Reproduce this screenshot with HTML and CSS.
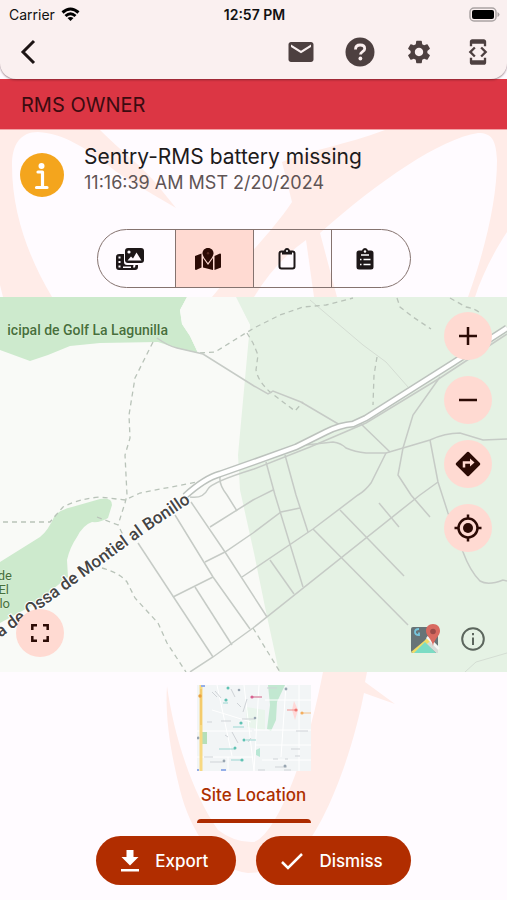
FILE: index.html
```html
<!DOCTYPE html>
<html lang="en">
<head>
  <meta charset="UTF-8" />
  <meta name="viewport" content="width=device-width, initial-scale=1" />
  <title>RMS Owner</title>
  <link rel="stylesheet" href="styles.css">
</head>
<body>
  <!-- Watermark -->
  <svg class="watermark" viewBox="0 0 507 900" aria-hidden="true">
    <path d="M0 130H100C120 150 140 165 154 181L176 208C150 192 125 180 108 165C85 148 65 134 38 132C20 132 12 145 12 165C12 215 30 260 52 297H3L0 285Z" />
    <path d="M385 130H507V232C495 250 482 275 475 297H468C485 250 497 200 497 160C496 140 492 133 478 133C440 139 380 180 320 233L337 297H212C235 268 270 235 292 202L282 162C310 150 345 145 385 130Z" />
    <path class="gap" d="M306 240L314 297H254Q275 262 306 240Z" />
    <path d="M167 686C173 730 190 790 218 830Q235 843 254 842C275 835 305 765 323 672H367L365 682L395 704L364 693C355 740 332 815 300 853Q275 873 248 873C215 870 190 830 180 790C170 750 165 715 167 686Z" />
  </svg>

  <header class="topbar">
    <div class="status">
      <div class="carrier">
        Carrier
        <svg width="19" height="15" viewBox="0 0 19 15" fill="none" stroke="#000" stroke-width="3">
          <path d="M1.500 5.500Q9.500-1.500 17.500 5.500" />
          <path d="M4.500 9Q9.500 4.500 14.500 9" />
          <path d="M6.500 11Q9.500 9 12.500 11L9.500 14Z" fill="#000" stroke="none" />
        </svg>
      </div>
      <div class="clock">12:57 PM</div>
      <svg class="battery" width="31" height="15" viewBox="0 0 31 15">
        <rect x="1" y="1" width="26" height="13" rx="4" fill="none" stroke="#aaa3a3" stroke-width="1.500" />
        <rect x="3" y="3" width="22" height="9" rx="2" fill="#000" />
        <path d="M28.500 5v5q2-1 2-2.500t-2-2.500" fill="#aaa3a3" />
      </svg>
    </div>
    <nav class="toolbar">
      <button class="back" aria-label="Back">
        <svg width="16" height="26" viewBox="0 0 16 26" fill="none" stroke="#1c1414" stroke-width="3"><path d="M14 2L3 13L14 24" /></svg>
      </button>
      <div class="tools">
        <button aria-label="Messages">
          <svg width="30" height="30" viewBox="0 0 24 24"><path d="M20 4H4c-1.100 0-2 .9-2 2v12c0 1.100.9 2 2 2h16c1.100 0 2-.9 2-2V6c0-1.100-.9-2-2-2zm0 4l-8 5-8-5V6l8 5 8-5v2z" /></svg>
        </button>
        <button aria-label="Help">
          <svg width="30" height="30" viewBox="0 0 30 30"><circle cx="15" cy="15" r="14.500" /><path d="M10.500 12.500c0-3 2-4.500 4.700-4.500 2.700 0 4.500 1.400 4.500 3.700 0 3-4.200 2.900-4.200 5.800" fill="none" stroke="#fbefef" stroke-width="2.800" /><circle cx="15.400" cy="21.500" r="1.900" fill="#fbefef" /></svg>
        </button>
        <button aria-label="Settings">
          <svg width="28" height="28" viewBox="0 0 24 24"><path d="M19.140 12.940c.04-.3.060-.61.060-.94 0-.32-.02-.64-.07-.94l2.030-1.580c.18-.14.230-.41.120-.61l-1.920-3.320c-.12-.22-.37-.29-.59-.22l-2.390.96c-.5-.38-1.030-.7-1.620-.94l-.36-2.540c-.04-.24-.24-.41-.48-.41h-3.840c-.24 0-.43.170-.47.410l-.36 2.540c-.59.240-1.130.570-1.620.940l-2.390-.96c-.22-.08-.47 0-.59.220L2.740 8.870c-.12.210-.08.470.120.610l2.030 1.580c-.05.300-.09.630-.09.940s.02.640.070.940l-2.030 1.580c-.18.140-.23.410-.12.610l1.920 3.320c.12.220.37.290.59.220l2.390-.96c.5.380 1.030.7 1.620.94l.36 2.540c.05.240.24.410.48.410h3.840c.24 0 .44-.17.470-.41l.36-2.540c.59-.24 1.130-.56 1.620-.94l2.390.96c.22.080.47 0 .59-.22l1.920-3.320c.12-.22.070-.47-.12-.61l-2.010-1.580zM12 15.600c-1.980 0-3.600-1.620-3.600-3.600s1.620-3.600 3.600-3.600 3.600 1.620 3.600 3.600-1.620 3.600-3.600 3.600z" /></svg>
        </button>
        <button aria-label="Developer">
          <svg width="28" height="28" viewBox="0 0 24 24"><path d="M7 5h10v2h2V3c0-1.100-.9-1.990-2-1.990L7 1c-1.100 0-2 .9-2 2v4h2V5zm8.410 11.590L20 12l-4.590-4.590L14 8.830 17.170 12 14 15.170l1.410 1.420zM10 15.170L6.830 12 10 8.830 8.590 7.410 4 12l4.590 4.590L10 15.170zM17 19H7v-2H5v4c0 1.100.9 2 2 2h10c1.100 0 2-.9 2-2v-4h-2v2z" /></svg>
        </button>
      </div>
    </nav>
  </header>

  <h1 class="banner">RMS OWNER</h1>

  <main>
    <section class="alert">
      <svg width="44" height="44" viewBox="0 0 44 44">
        <circle cx="22" cy="22" r="22" fill="#f4a51d" />
        <circle cx="21.500" cy="13" r="3" fill="#fff" />
        <path d="M18 19H22.500V34M16.500 34.500H27" fill="none" stroke="#fff" stroke-width="3.200" stroke-linecap="round" stroke-linejoin="round" />
      </svg>
      <div>
        <h2>Sentry-RMS battery missing</h2>
        <p>11:16:39 AM MST 2/20/2024</p>
      </div>
    </section>

    <div class="segments">
      <button aria-label="Media">
        <svg width="28" height="24" viewBox="0 0 28 24">
          <path d="M3 7H8V15Q8 18 11 18H22V20Q22 23 19 23H3Q0 23 0 20V10Q0 7 3 7Z" />
          <path d="M2.500 9.500h2v2h-2zM2.500 14h2v2h-2zM2.500 18.500h2v2h-2zM7 19.500H15V21H7zM17.500 18H19.500L19 20.500H17Z" fill="#fffbff" />
          <rect x="9" y="1" width="19" height="15" rx="3" />
          <circle cx="13" cy="5" r="1.600" fill="#fffbff" />
          <path d="M11.500 13.500L15 9.500L17 11.500L20.500 5.500L25.500 13.500Z" fill="#fffbff" />
        </svg>
      </button>
      <button class="active" aria-label="Map">
        <svg width="26" height="24" viewBox="0 0 26 24">
          <path d="M0 9L6.500 6.500V20.500L1 23Q0 23 0 22ZM8 11L13 18L18 11V23L8 20.500ZM19.500 9L25 6.500Q26 6.500 26 7.500V20.500L19.500 23Z" />
          <path d="M13 1C9.500 1 7.500 3.500 7.500 6.300C7.500 9 11 13.500 13 16C15 13.500 18.500 9 18.500 6.300C18.500 3.500 16.500 1 13 1Z" />
          <circle cx="13" cy="6.300" r="1.200" fill="#5a2d24" />
        </svg>
      </button>
      <button aria-label="Notes">
        <svg width="18" height="24" viewBox="0 0 18 24">
          <rect x="1.500" y="4.500" width="15" height="17" rx="2" fill="none" stroke="#1d1718" stroke-width="2" />
          <path d="M4 4H6Q6.500 1 9 1T12 4H14V7.500H4Z" /><circle cx="9" cy="4" r="1" fill="#fff" />
        </svg>
      </button>
      <button aria-label="Checklist">
        <svg width="18" height="24" viewBox="0 0 18 24">
          <path d="M3 3.500H6Q6.500 1 9 1T12 3.500H15Q17.500 3.500 17.500 6V20Q17.500 22.500 15 22.500H3Q.5 22.500 .5 20V6Q.5 3.500 3 3.500Z" />
          <circle cx="9" cy="4.500" r="1.200" fill="#fff" />
          <path d="M5 8H13M4 12.500H5.500M7.500 12.500H14.500M4 17.500H5.500M7.500 17.500H14.500" stroke="#fff" stroke-width="1.300" />
        </svg>
      </button>
    </div>

    <section class="map">
      <svg class="map-canvas" viewBox="0 0 507 375">
        <rect width="507" height="375" fill="#f9faf7" />
        <path class="wood" d="M235 0H507V375H279L265 310L254 256L240 193L238 158L246 71L250 28Z" />
        <path class="park" d="M0 0H187L180 13L182 27L190 39L198 56L180 52L158 45L100 46L70 49L48 58L30 64L0 53Z" />
        <path class="land" d="M187 0H236L250 28L246 60L203 57L198 56L190 39L182 27L180 13Z" />
        <path class="park" d="M0 265L40 240Q48 234 55 218Q62 212 72 210L100 202Q112 200 112 208L108 221Q100 226 92 225Q83 228 77 240Q70 250 67 263L68 280L33 308L0 326Z" />

        <g class="road faint">
          <path d="M310 3L363 48L386 65L408 90" />
          <path d="M465 375L476 365L507 356" />
        </g>
        <g class="trail">
          <path d="M153 45L135 81L129 118L130 141L125 158L127 198L125 206L118 228" />
          <path d="M3 225H50L63 210Q78 202 100 200L125 203L140 196L197 185" />
          <path d="M97 220L118 228L124 240" />
          <path d="M102 271Q120 276 127 285L135 301L158 326L167 346L186 375" />
          <path d="M200 56L215 55L254 31L280 18L303 10L326 8L353 1" />
          <path d="M247 36L253 46L258 58L256 73Q258 84 270 95L295 114L303 105" />
          <path d="M397 1L400 10L413 20L431 32" />
          <path d="M450 1L466 10Q476 12 480 16" />
          <path d="M377 60L374 78L373 108" />
          <path d="M253 331L280 375" />
        </g>
        <g class="road">
          <path d="M157 41Q168 49 177 51L203 57L254 89L268 97L273 94L301 105L340 128" />
          <path d="M360 126L390 155" />
          <path d="M306 148L333 145Q341 146 346 151Q355 155 366 156H386L403 151L430 143Q445 136 460 136L483 143L507 142" />
          <path d="M440 80L413 118L403 151L398 178L411 198L430 220" />
          <path d="M386 156L371 186Q365 194 358 198L313 232L242 280" />
          <path d="M430 143L438 185L448 216L463 255Q470 274 480 284Q488 289 503 283L507 284" />
          <path d="M438 185L420 198L253 331L213 360L190 375" />
          <path d="M266 165L275 198L303 290" />
          <path d="M285 158L296 198L308 235" />
          <path d="M273 193L253 203L210 230" />
          <path d="M300 211L281 215L253 236L225 255L205 265" />
          <path d="M138 246L213 360" />
          <path d="M175 218L213 280L250 332" />
          <path d="M191 205L225 255L267 320" />
          <path d="M213 280L173 300" />
          <path d="M195 290L232 348" />
          <path d="M270 263L294 297" />
          <path d="M313 232L408 328" />
          <path d="M340 213L404 279" />
          <path d="M379 206L399 230" />
          <path d="M220 180Q219 188 227 198L237 214" />
          <path d="M190 200Q203 202 208 192Q212 185 254 172L310 150L366 126L440 81L507 37" />
        </g>
        <path class="highway-edge" d="M185 199Q205 181 220 177L254 165L296 150L326 135Q340 128 353 127L366 121L453 66L507 31" />
        <path class="highway" d="M185 199Q205 181 220 177L254 165L296 150L326 135Q340 128 353 127L366 121L453 66L507 31" />

        <path id="roadname" d="M-60 384L0 341L145 236L191 205" fill="none" />
        <text class="road-label" text-anchor="end"><textPath href="#roadname" startOffset="100%">ra de Ossa de Montiel al Bonillo</textPath></text>
        <text class="park-label" x="168" y="38" text-anchor="end">icipal de Golf La Lagunilla</text>
        <g class="park-label small" text-anchor="end">
          <text x="12" y="283">de</text>
          <text x="9" y="297">El</text>
          <text x="10" y="311">lo</text>
        </g>
      </svg>

      <div class="map-controls">
        <button class="round" aria-label="Zoom in"><svg width="18" height="18" viewBox="0 0 18 18"><path d="M9 0V18M0 9H18" /></svg></button>
        <button class="round" aria-label="Zoom out"><svg width="18" height="18" viewBox="0 0 18 18"><path d="M0 9H18" /></svg></button>
        <button class="round" aria-label="Directions"><svg width="26" height="26" viewBox="0 0 26 26"><path d="M13 2L24 13L13 24L2 13Z" fill="#2c0b05" stroke-linejoin="round" /><path d="M9 16.500V11.500H16" stroke="#ffdad2" /><path d="M15 7.500L19.500 11.500L15 15.500Z" fill="#ffdad2" stroke="none" /></svg></button>
        <button class="round" aria-label="My location"><svg width="28" height="28" viewBox="0 0 28 28"><circle cx="14" cy="14" r="9.500" /><circle cx="14" cy="14" r="5" fill="#2c0b05" stroke="none" /><path d="M14 .5V5M14 23V27.500M.5 14H5M23 14H27.500" /></svg></button>
      </div>
      <button class="round fullscreen" aria-label="Full screen"><svg width="18" height="18" viewBox="0 0 18 18"><path d="M1.300 6V1.300H6M12 1.300H16.700V6M16.700 12V16.700H12M6 16.700H1.300V12" /></svg></button>
      <div class="attribution">
        <svg width="30" height="30" viewBox="0 0 30 30">
          <rect x="0" y="3" width="27" height="26" rx="2" fill="#677477" />
          <path d="M17 12L27 22V29H25L13 18Z" fill="#d7dcd7" />
          <path d="M19 12L0 28L2 29H5L23 14Z" fill="#f1dc67" />
          <path d="M14 18L25 29H3Z" fill="#7cdcc4" />
          <path d="M16 13L28 25" stroke="#f4f7f4" stroke-width="2.500" />
          <path d="M8 5Q4 5 4 8T8 11V8.500" fill="none" stroke="#78c5dc" stroke-width="1.800" />
          <path d="M22 0C17.500 0 15 3 15 7C15 12 21 15 22 22C23 15 29 12 29 7C29 3 26.500 0 22 0Z" fill="#d86a60" />
          <circle cx="22" cy="7.500" r="2.800" fill="#9c4b48" />
        </svg>
        <svg width="24" height="24" viewBox="0 0 24 24" fill="none" stroke="#5c665d" stroke-width="2"><circle cx="12" cy="12" r="10.800" /><path d="M12 10.500V18M12 6V8.300" /></svg>
      </div>
    </section>

    <div class="tabs">
      <button class="tab">
        <svg width="114" height="86" viewBox="0 0 114 86">
          <rect width="114" height="86" fill="#f2f5f6" />
          <path d="M71 0H88L80 17L79 35L74 46L70 44L73 20Z" fill="#c2e8d1" />
          <path d="M49 22L68 25V45L50 42Z" fill="#e9f5ec" />
          <rect x="5" y="47" width="5" height="12" fill="#b6dfb8" />
          <path d="M59 65L63 63V72L59 70Z" fill="#b9e7d5" />
          <path d="M97 16L101 25L98 35L95 25Z" fill="#ffd8d7" />
          <path d="M0 46H55M0 72H56M57 45H114M58 60H114M20 0L35 71M47 0L57 86M15 25L54 37M62 0L57 86M89 0L84 72M102 0V86M68 15H114M65 75H114M31 72V86" stroke="#fff" stroke-width="1" fill="none" />
          <path d="M4 0V86" stroke="#f8d982" stroke-width="3" />
          <path d="M4 4V40" stroke="#efbd56" stroke-width="1" />
          <path d="M18 6L24 13M34 4L38 12M50 14L46 27M35 47L41 58M28 50L31 52M10 37H15M24 36H34M45 34H58M7 72H16M13 77H26M78 82H90M99 46H111M70 3H80M61 85H68M87 85H94M98 71H103M94 64H103M76 74H81M88 74H91M40 18L44 22M15 7L20 12M51 57L54 53" stroke="#cfd3d7" stroke-width="1" />
          <path d="M22 64H38M36 42H47M34 75H46M26 18H31M49 55H59" stroke="#9ad6d1" stroke-width="1" />
          <g fill="#5fc2b3"><circle cx="31" cy="3" r="1.500" /><circle cx="29" cy="15" r="1.600" /><circle cx="44" cy="38" r="1.600" /><circle cx="47" cy="55" r="1.500" /><circle cx="38" cy="63" r="1.500" /><circle cx="45" cy="75" r="1.600" /></g>
          <g fill="#98a5b1"><circle cx="42" cy="5" r="1.300" /><circle cx="58" cy="33" r="1.300" /><circle cx="89" cy="4" r="1.400" /><circle cx="88" cy="81" r="1.500" /><circle cx="27" cy="76" r="1.400" /><circle cx="1" cy="53" r="1.400" /></g>
          <path d="M55 12H65" stroke="#e2abbd" stroke-width="2" /><circle cx="55" cy="12" r="1.600" fill="#d86191" />
          <path d="M90 25H98" stroke="#f08f8d" /><circle cx="99" cy="25" r="1.600" fill="#ed7772" />
          <path d="M106 28H114" stroke="#f3c28c" /><circle cx="105" cy="28" r="1.600" fill="#f4ae5f" />
          <circle cx="3" cy="11" r="1.700" fill="#e8a03f" /><path d="M24 85H29M4 1H8M0 85H2" stroke="#94aee8" stroke-width="2" />
        </svg>
        <span>Site Location</span>
      </button>
    </div>
  </main>

  <footer class="actions">
    <button>
      <svg width="18" height="22" viewBox="0 0 18 22" fill="#fff"><path d="M5.500 0H12.500V7H17.500L9 15.500L.5 7H5.500ZM0 19H18V21.500H0Z" /></svg>
      Export
    </button>
    <button>
      <svg width="22" height="18" viewBox="0 0 22 18" fill="none" stroke="#fff" stroke-width="2.500"><path d="M1 10L7 16L21 2" /></svg>
      Dismiss
    </button>
  </footer>
</body>
</html>
```

FILE: styles.css
```css
* {
  box-sizing: border-box;
  margin: 0;
  padding: 0;
}

body {
  position: relative;
  z-index: 0;
  display: flex;
  flex-direction: column;
  min-height: 100vh;
  background-color: #fffbff;
  color: #201a1b;
  font-family: Inter, "Liberation Sans", sans-serif;
}

button {
  display: flex;
  align-items: center;
  justify-content: center;
  border: none;
  background: none;
  font-family: inherit;
  cursor: pointer;
}

svg {
  display: block;
  flex-shrink: 0;
}

/* sits behind everything else */
.watermark {
  position: absolute;
  top: 0;
  left: 0;
  z-index: -1;
  width: 100%;
  fill: #ffece8;
}

.watermark .gap {
  fill: #fffbff;
}

/* Top bar */
.topbar {
  position: relative;
  height: 79px;
  background-color: #faf0f0;
  border-radius: 0 0 16px 16px;
  box-shadow: 0 1px 2px rgba(60, 20, 30, 0.5);
}

.status {
  display: grid;
  grid-template-columns: 1fr auto 1fr;
  align-items: center;
  height: 28px;
  padding: 0 7px 0 9px;
  color: #111;
  font-size: 14px;
}

.carrier {
  display: flex;
  align-items: center;
  gap: 6px;
}

.clock {
  font-weight: 600;
}

.battery {
  justify-self: end;
}

.toolbar {
  display: flex;
  align-items: center;
  justify-content: space-between;
  height: 48px;
  padding: 0 5px 0 10px;
}

.toolbar button {
  width: 48px;
  height: 48px;
}

.toolbar .back {
  width: 36px;
}

.tools {
  display: flex;
  gap: 11px;
  fill: #4d4040;
}

.banner {
  height: 51px;
  padding: 0 21px;
  background-color: #dc3644;
  border-bottom: 1px solid #f2a2a5;
  color: #3b0b10;
  font-size: 20px;
  font-weight: 400;
  line-height: 52px;
}

/* Alert summary */
.alert {
  display: flex;
  align-items: center;
  gap: 20px;
  height: 90px;
  padding: 0 20px;
}

.alert h2 {
  font-size: 21px;
  font-weight: 400;
  line-height: 28px;
  margin-top: -12px;
}

.alert p {
  color: #605455;
  font-size: 18px;
  line-height: 24px;
}

.segments {
  display: flex;
  width: 314px;
  height: 59px;
  margin: 9px auto;
  border: 1px solid #85736f;
  border-radius: 30px;
  overflow: hidden;
}

.segments button {
  flex: 1;
  padding-right: 12px;
  fill: #1d1718;
}

.segments button + button {
  border-left: 1px solid #85736f;
}

.segments .active {
  background-color: #ffdad2;
  fill: #2c0b05;
}

/* Map */
.map {
  position: relative;
}

.map-canvas {
  width: 100%;
  height: auto;
}

.land {
  fill: #f9faf7;
}

.wood {
  fill: #e5f2e4;
}

.park {
  fill: #cdeacd;
}

.road {
  fill: none;
  stroke: #c6cbc6;
  stroke-width: 1.5;
}

.faint {
  stroke: #d4ddd3;
  stroke-width: 1;
}

.trail {
  fill: none;
  stroke: #b9c3b9;
  stroke-width: 1.3;
  stroke-dasharray: 5 4;
}

.highway-edge {
  fill: none;
  stroke: #bcc2bd;
  stroke-width: 7;
}

.highway {
  fill: none;
  stroke: #fff;
  stroke-width: 4;
}

.road-label,
.park-label {
  font-family: Roboto, sans-serif;
  stroke: #fff;
  stroke-width: 2;
  paint-order: stroke;
}

.road-label {
  fill: #444;
  font-size: 17px;
  font-weight: 500;
}

.park-label {
  fill: #47703c;
  stroke: #daf0d8;
  stroke-width: 1;
  font-size: 14px;
  font-weight: 500;
}

.small {
  font-size: 13px;
  font-weight: 400;
}

.map-controls {
  position: absolute;
  top: 15px;
  right: 15px;
  display: flex;
  flex-direction: column;
  gap: 16px;
}

.round {
  width: 48px;
  height: 48px;
  border-radius: 50%;
  background-color: #ffdad2;
  fill: none;
  stroke: #2c0b05;
  stroke-width: 2.5;
}

.fullscreen {
  position: absolute;
  bottom: 15px;
  left: 16px;
}

.attribution {
  position: absolute;
  right: 22px;
  bottom: 18px;
  display: flex;
  align-items: center;
  gap: 20px;
}

/* Tabs */
.tabs {
  display: flex;
  justify-content: center;
  padding-top: 13px;
}

.tab {
  flex-direction: column;
  gap: 12px;
  color: #ad2f00;
  font-size: 17px;
  font-weight: 500;
  line-height: 24px;
}

.tab::after {
  content: "";
  width: 100%;
  height: 4px;
  border-radius: 4px 4px 0 0;
  background-color: #ad2b00;
}

/* Bottom buttons */
.actions {
  display: flex;
  justify-content: center;
  gap: 20px;
  padding: 13px 0 15px;
}

.actions button {
  gap: 16px;
  height: 49px;
  padding: 0 28px 0 25px;
  border-radius: 25px;
  background-color: #b12d00;
  color: #fff;
  font-size: 17px;
  font-weight: 500;
}
```
